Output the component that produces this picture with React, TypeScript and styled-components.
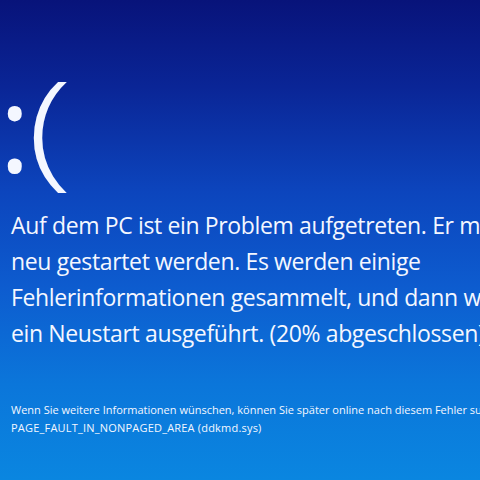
import styled, { createGlobalStyle } from "styled-components";

const GlobalStyle = createGlobalStyle`
  html, body {
    margin: 0;
    padding: 0;
    width: 480px;
    height: 480px;
    overflow: hidden;
  }
`;

const Screen = styled.div`
  width: 480px;
  height: 480px;
  overflow: hidden;
  box-sizing: border-box;
  padding: 55px 0 0 11px;
  display: flex;
  flex-direction: column;
  color: #f4f7ff;
  font-family: "Open Sans", "Noto Sans", sans-serif;
  background: linear-gradient(
    180deg,
    #08137a 0%,
    #0a2596 18%,
    #0c45bd 40%,
    #0d5ccf 60%,
    #0b76da 80%,
    #0a86e0 100%
  );
`;

const Face = styled.div`
  display: flex;
  align-items: flex-start;
  height: 131px;
  margin-left: -12px;
  line-height: 1;
  white-space: nowrap;
`;

const Colon = styled.span`
  font-size: 120px;
  font-weight: 400;
  letter-spacing: -6px;
  margin-top: 11px;
`;

const Paren = styled.span`
  display: inline-block;
  font-size: 128px;
  font-weight: 300;
  margin-top: 5px;
  margin-left: 2px;
  transform: scaleX(1.3);
  transform-origin: left center;
`;

const Message = styled.div`
  margin-top: 21px;
  display: flex;
  flex-direction: column;
`;

const Line = styled.div<{ $size: number; $height: number; $spacing?: number }>`
  font-size: ${(p) => p.$size}px;
  line-height: ${(p) => p.$height}px;
  letter-spacing: ${(p) => p.$spacing ?? 0}px;
  white-space: nowrap;
`;

const Details = styled.div`
  margin-top: 50px;
  display: flex;
  flex-direction: column;
`;

export default function App() {
  return (
    <>
      <GlobalStyle />
      <Screen>
        <Face>
          <Colon>:</Colon>
          <Paren>(</Paren>
        </Face>
        <Message>
          <Line $size={23} $height={36} $spacing={-0.36}>
            Auf dem PC ist ein Problem aufgetreten. Er muss
          </Line>
          <Line $size={23} $height={36} $spacing={-0.36}>
            neu gestartet werden. Es werden einige
          </Line>
          <Line $size={23} $height={36} $spacing={-0.36}>
            Fehlerinformationen gesammelt, und dann wird
          </Line>
          <Line $size={23} $height={36} $spacing={-0.36}>
            ein Neustart ausgeführt. (20% abgeschlossen)
          </Line>
        </Message>
        <Details>
          <Line $size={11} $height={18} $spacing={0}>
            Wenn Sie weitere Informationen wünschen, können Sie später online nach diesem Fehler suchen:
          </Line>
          <Line $size={11} $height={18} $spacing={0.2}>
            PAGE_FAULT_IN_NONPAGED_AREA (ddkmd.sys)
          </Line>
        </Details>
      </Screen>
    </>
  );
}
